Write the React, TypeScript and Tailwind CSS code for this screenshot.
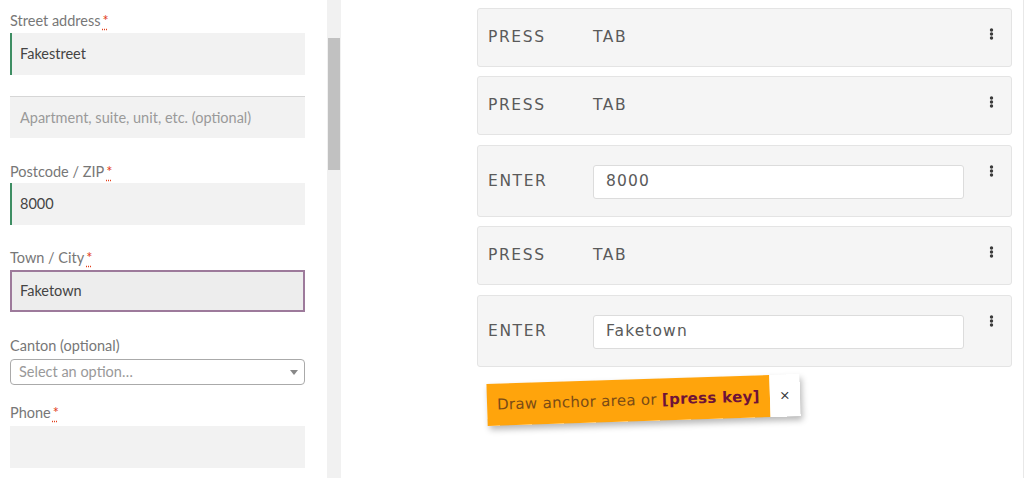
import React from "react";

function Req() {
  return (
    <abbr
      title="required"
      className="text-[#e2401c] ml-[2px]"
      style={{ textDecoration: "underline dotted", textUnderlineOffset: "3px" }}
    >
      *
    </abbr>
  );
}

function Label({ children, req, className = "" }: { children: React.ReactNode; req?: boolean; className?: string }) {
  return (
    <div className={`h-[20px] leading-[20px] text-[14.5px] text-[#777] ${className}`}>
      {children}
      {req && <Req />}
    </div>
  );
}

function Dots() {
  return (
    <svg width="5" height="12" viewBox="0 0 5 12" className="block">
      <circle cx="2.5" cy="2" r="1.7" fill="#3a3a3a" />
      <circle cx="2.5" cy="6" r="1.7" fill="#3a3a3a" />
      <circle cx="2.5" cy="10" r="1.7" fill="#3a3a3a" />
    </svg>
  );
}

function Card({ label, value, input, tall, className = "" }: { label: string; value: string; input?: boolean; tall?: boolean; className?: string }) {
  return (
    <div
      className={`flex border border-[#e4e4e4] rounded-[3px] bg-[#f5f5f5] ${tall ? "h-[72px]" : "h-[59px]"} ${className}`}
    >
      <div className="flex flex-1 items-center pl-[10px] pt-[1px]">
        <div className="w-[105px] text-[15.5px] tracking-[1.6px] text-[#5a5a5a]">{label}</div>
        {input ? (
          <div className="w-[371px] h-[34px] bg-white border border-[#dcdcdc] rounded-[3px] flex items-center pl-[12px] text-[15.5px] tracking-[1.1px] text-[#5a5a5a]">
            {value}
          </div>
        ) : (
          <div className="text-[15.5px] tracking-[1.6px] text-[#5a5a5a]">{value}</div>
        )}
      </div>
      <div className="w-[46px] pl-[24px] pt-[19px]">
        <Dots />
      </div>
    </div>
  );
}

export default function App() {
  return (
    <div
      className="flex w-[1024px] h-[478px] overflow-hidden bg-white"
      style={{ fontFamily: "Lato, 'Noto Sans', sans-serif" }}
    >
      {/* Left form pane */}
      <div className="w-[327px] pl-[10px] pr-[22px] pt-[11px]">
        <Label req>Street address</Label>
        <div className="mt-[2px] h-[42px] bg-[#f2f2f2] border-l-2 border-[#3e8e63] flex items-center pl-[8px] text-[14.5px] text-[#444]">
          Fakestreet
        </div>
        <div className="mt-[21px] h-[42px] bg-[#f2f2f2] border-t border-[#d6d6d6] flex items-center pl-[10px] text-[14.5px] text-[#9a9a9a]">
          Apartment, suite, unit, etc. (optional)
        </div>

        <Label req className="mt-[24px]">Postcode / ZIP</Label>
        <div className="mt-[1px] h-[42px] bg-[#f2f2f2] border-l-2 border-[#3e8e63] flex items-center pl-[8px] text-[14.5px] text-[#444]">
          8000
        </div>

        <Label req className="mt-[23px]">Town / City</Label>
        <div className="mt-[2px] h-[42px] bg-[#ededed] border-2 border-[#9d7a9b] flex items-center pl-[8px] text-[14.5px] text-[#444]">
          Faketown
        </div>

        <Label className="mt-[24px]">Canton (optional)</Label>
        <div className="mt-[3px] h-[26px] bg-white border border-[#aaa] rounded-[4px] flex items-center justify-between pl-[8px] pr-[6px] text-[14.5px] text-[#999]">
          <span>Select an option…</span>
          <svg width="8" height="5" viewBox="0 0 8 5">
            <path d="M0 0 L8 0 L4 5 Z" fill="#888" />
          </svg>
        </div>

        <Label req className="mt-[18px]">Phone</Label>
        <div className="mt-[3px] h-[42px] bg-[#f2f2f2]" />
      </div>

      {/* Scrollbar */}
      <div className="w-[14px] h-full bg-[#f1f1f1] px-[1px]">
        <div className="mt-[38px] h-[132px] bg-[#c1c1c1]" />
      </div>

      {/* Right pane */}
      <div
        className="flex-1 pl-[136px] pr-[11px] pt-[8px] border-r border-[#e8e8e8]"
        style={{ fontFamily: "'DejaVu Sans', Verdana, sans-serif" }}
      >
        <Card label="PRESS" value="TAB" />
        <Card label="PRESS" value="TAB" className="mt-[9px]" />
        <Card label="ENTER" value="8000" input tall className="mt-[10px]" />
        <Card label="PRESS" value="TAB" className="mt-[9px]" />
        <Card label="ENTER" value="Faketown" input tall className="mt-[10px]" />

        <div className="mt-[12px] ml-[10px] inline-flex h-[42px] rotate-[-1.8deg] shadow-[2px_4px_6px_rgba(0,0,0,0.28)]">
          <div className="w-[283px] bg-[#ffa40c] flex items-center pl-[10px] text-[15px] tracking-[0.3px] text-[#7a4b16] whitespace-nowrap">
            Draw anchor area or&nbsp;<span className="font-bold text-[#6e1238]">[press key]</span>
          </div>
          <div className="w-[30px] bg-white flex items-center justify-center text-[13px] text-[#333]">
            ×
          </div>
        </div>
      </div>
    </div>
  );
}
